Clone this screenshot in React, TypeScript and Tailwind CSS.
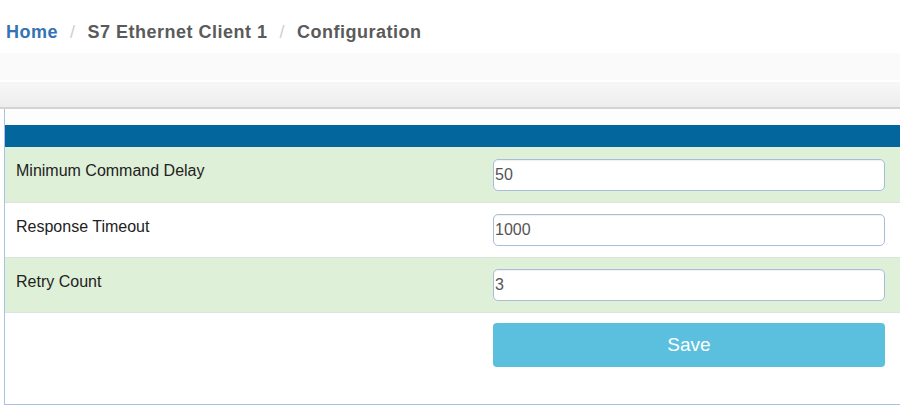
import React from "react"

const rows = [
  { label: "Minimum Command Delay", value: "50", shade: true },
  { label: "Response Timeout", value: "1000", shade: false },
  { label: "Retry Count", value: "3", shade: true },
]

export default function App() {
  return (
    <div className="w-[900px] h-[406px] overflow-hidden bg-white font-['Liberation_Sans',Arial,sans-serif]">
      {/* Breadcrumb */}
      <nav className="h-[53px] flex items-start pl-[6px] pt-[23px] text-[18px] font-bold leading-none tracking-[0.5px]">
        <span className="text-[#3474b4]">Home</span>
        <span className="px-[12px] text-[#cfcfcf] font-normal">/</span>
        <span className="text-[#5a5a5a]">S7 Ethernet Client 1</span>
        <span className="px-[12px] text-[#cfcfcf] font-normal">/</span>
        <span className="text-[#5a5a5a]">Configuration</span>
      </nav>

      {/* Toolbar band */}
      <div className="h-[27px] bg-[#fafafa]" />
      <div className="h-[2px] bg-white" />
      <div className="h-[27px] bg-gradient-to-b from-[#f7f7f7] to-[#ededed] border-b-2 border-[#d3d3d3]" />

      {/* Panel */}
      <div className="ml-[4px] border-l border-b border-[#a9c1e4] bg-white">
        <div className="h-[16px] bg-[#fdfdfd]" />
        <div className="h-[22px] bg-[#03669c]" />
        {rows.map((r, i) => (
          <div
            key={r.label}
            className={`flex h-[55px] ${i > 0 ? "border-t border-[#dde3dc]" : ""} ${r.shade ? "bg-[#dff0d8]" : "bg-white"}`}
          >
            <div className="flex-1 pl-[11px] pt-[14px] text-[16px] leading-[20px] text-[#222]">{r.label}</div>
            <div className="w-[407px] pr-[15px] flex items-center">
              <input
                readOnly
                value={r.value}
                className="w-[392px] h-[32px] rounded-[5px] border border-[#a9bdd8] bg-white pl-[1px] text-[16px] text-[#555] shadow-[inset_0_1px_1px_rgba(0,0,0,0.06)] outline-none font-['Liberation_Sans',Arial,sans-serif]"
              />
            </div>
          </div>
        ))}
        <div className="flex h-[92px] border-t border-[#dde3ea] bg-white">
          <div className="flex-1" />
          <div className="w-[407px] pr-[15px] pt-[10px]">
            <button className="w-[392px] h-[44px] rounded-[4px] bg-[#5bc0de] text-white text-[19px] font-['Liberation_Sans',Arial,sans-serif]">
              Save
            </button>
          </div>
        </div>
      </div>
    </div>
  )
}
